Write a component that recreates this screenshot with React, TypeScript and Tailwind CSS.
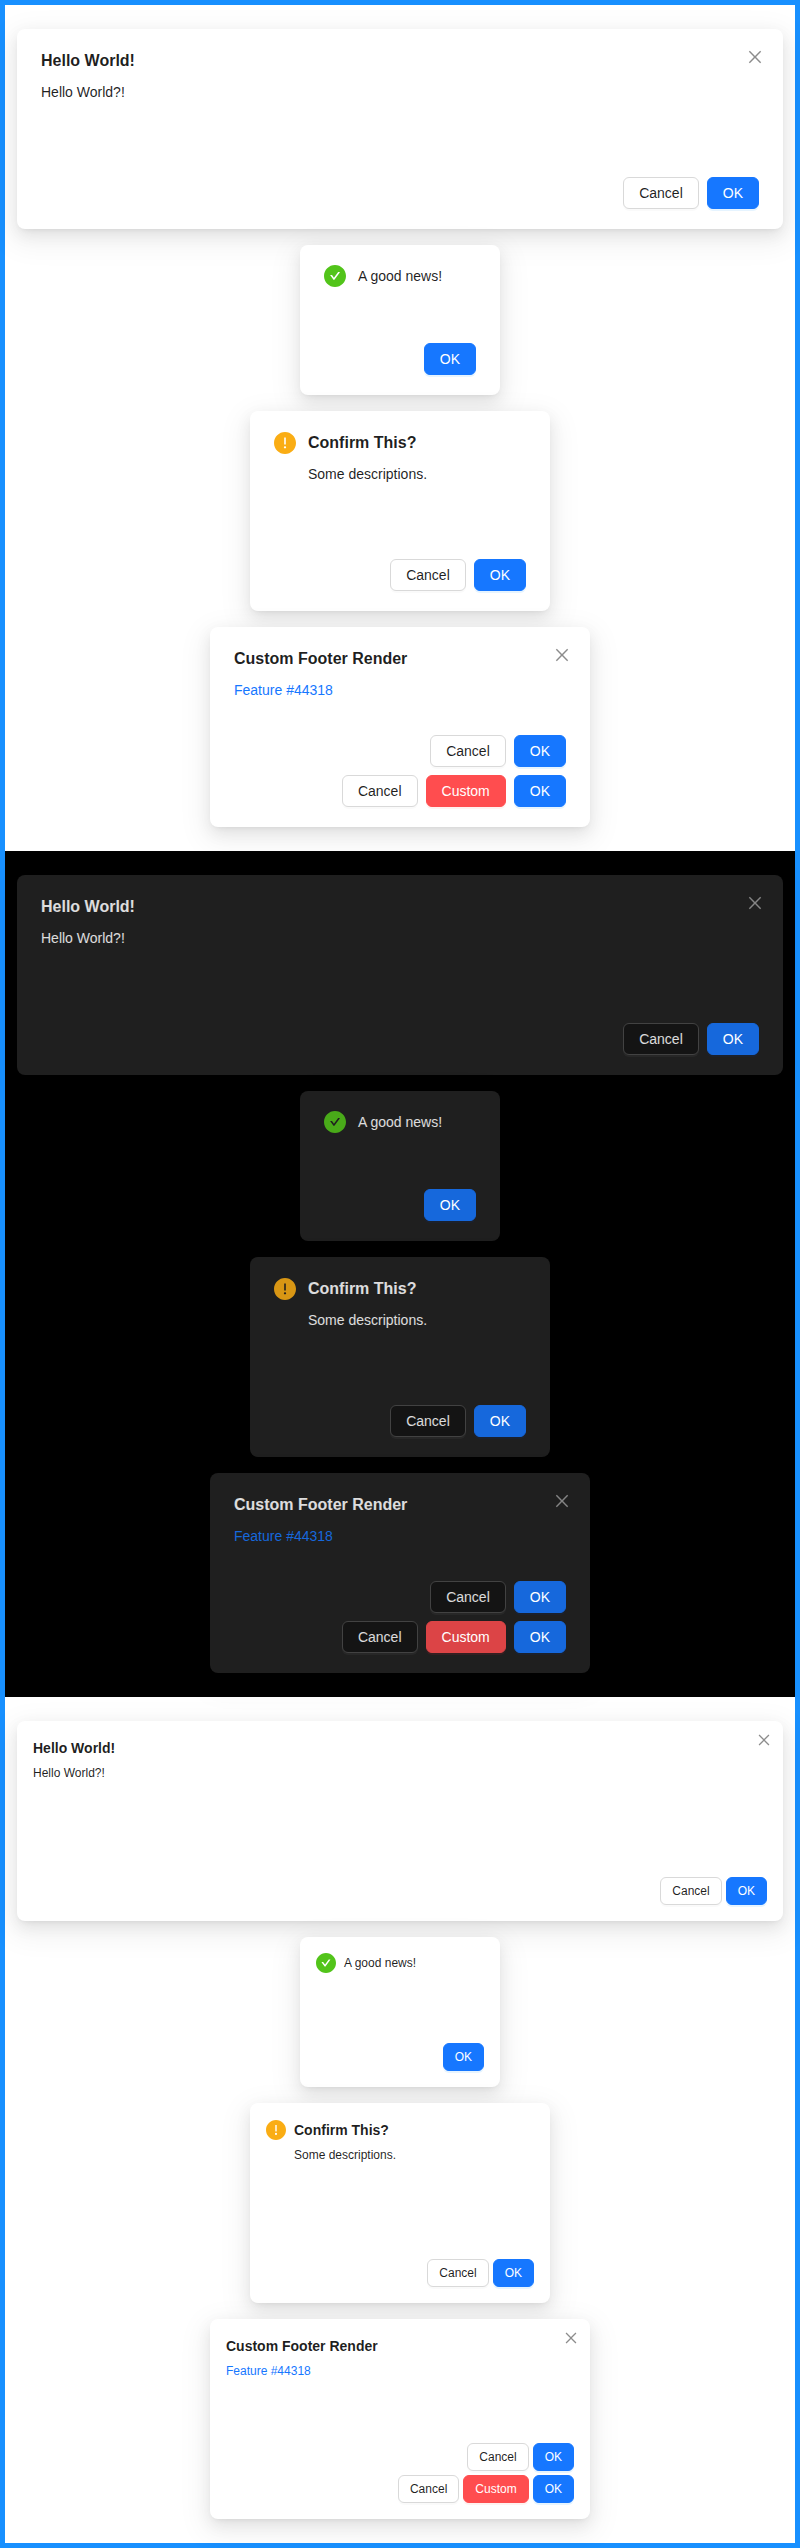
import type { ReactNode } from 'react';
import clsx from 'clsx';

type Mode = 'light' | 'dark';
type Size = 'default' | 'compact';

interface Look {
  mode: Mode;
  size: Size;
}

const CLOSE_PATH =
  'M799.86 166.31c.02 0 .04.02.08.06l57.69 57.7c.04.03.05.05.06.08a.12.12 0 010 .06c0 .03-.02.05-.06.09L569.93 512l287.7 287.7c.04.04.05.06.06.09a.12.12 0 010 .07c0 .02-.02.04-.06.08l-57.7 57.69c-.03.04-.05.05-.07.06a.12.12 0 01-.07 0c-.03 0-.05-.02-.09-.06L512 569.93l-287.7 287.7c-.04.04-.06.05-.09.06a.12.12 0 01-.07 0c-.02 0-.04-.02-.08-.06l-57.69-57.7c-.04-.03-.05-.05-.06-.07a.12.12 0 010-.07c0-.03.02-.05.06-.09L454.07 512l-287.7-287.7c-.04-.04-.05-.06-.06-.09a.12.12 0 010-.07c0-.02.02-.04.06-.08l57.7-57.69c.03-.04.05-.05.07-.06a.12.12 0 01.07 0c.03 0 .05.02.09.06L512 454.07l287.7-287.7c.04-.04.06-.05.09-.06a.12.12 0 01.07 0z';
const CHECK_PATH =
  'M512 64C264.6 64 64 264.6 64 512s200.6 448 448 448 448-200.6 448-448S759.4 64 512 64zm193.5 301.7l-210.6 292a31.8 31.8 0 01-51.7 0L318.5 484.9c-3.8-5.3 0-12.7 6.5-12.7h46.9c10.2 0 19.9 4.9 25.9 13.3l71.2 98.8 157.2-218c6-8.3 15.6-13.3 25.9-13.3H699c6.5 0 10.3 7.4 6.5 12.7z';
const WARNING_PATH =
  'M512 64C264.6 64 64 264.6 64 512s200.6 448 448 448 448-200.6 448-448S759.4 64 512 64zm-32 232c0-4.4 3.6-8 8-8h48c4.4 0 8 3.6 8 8v272c0 4.4-3.6 8-8 8h-48c-4.4 0-8-3.6-8-8V296zm32 440a48.01 48.01 0 010-96 48.01 48.01 0 010 96z';

function Glyph({ path, className }: { path: string; className: string }) {
  return (
    <svg viewBox="64 64 896 896" fill="currentColor" fillRule="evenodd" aria-hidden="true" className={className}>
      <path d={path} />
    </svg>
  );
}

type Kind = 'default' | 'primary' | 'danger';

const kindStyles: Record<Mode, Record<Kind, string>> = {
  light: {
    default: 'border-[#d9d9d9] bg-white text-black/88 shadow-[0_2px_0_rgba(0,0,0,0.02)]',
    primary: 'border-[#1677ff] bg-[#1677ff] text-white shadow-[0_2px_0_rgba(5,145,255,0.1)]',
    danger: 'border-[#ff4d4f] bg-[#ff4d4f] text-white shadow-[0_2px_0_rgba(255,38,5,0.06)]',
  },
  dark: {
    default: 'border-[#424242] bg-[#141414] text-white/85 shadow-[0_2px_0_rgba(255,255,255,0.04)]',
    primary: 'border-[#1668dc] bg-[#1668dc] text-white shadow-[0_2px_0_rgba(0,60,180,0.1)]',
    danger: 'border-[#dc4446] bg-[#dc4446] text-white shadow-[0_2px_0_rgba(238,38,56,0.11)]',
  },
};

function Button({ mode, size, kind = 'default', children }: Look & { kind?: Kind; children: ReactNode }) {
  return (
    <button
      type="button"
      className={clsx(
        'flex cursor-pointer items-center justify-center rounded-md border whitespace-nowrap',
        size === 'default' ? 'h-8 px-[15px] text-sm leading-[22px]' : 'h-7 px-[11px] text-xs leading-5',
        kindStyles[mode][kind],
      )}
    >
      {children}
    </button>
  );
}

function ButtonRow({ size, children }: { size: Size; children: ReactNode }) {
  return <div className={clsx('flex justify-end', size === 'default' ? 'gap-2' : 'gap-1')}>{children}</div>;
}

interface CardProps extends Look {
  className: string;
  title?: string;
  icon?: 'success' | 'warning';
  closable?: boolean;
  children: ReactNode;
  footer: ReactNode;
}

function ModalCard({ mode, size, className, title, icon, closable, children, footer }: CardProps) {
  const regular = size === 'default';
  const light = mode === 'light';
  return (
    <section
      className={clsx(
        'relative flex max-w-full flex-col rounded-lg shadow-[0_6px_16px_0_rgba(0,0,0,0.08),0_3px_6px_-4px_rgba(0,0,0,0.12),0_9px_28px_8px_rgba(0,0,0,0.05)]',
        regular ? 'px-6 py-5' : 'p-4',
        light ? 'bg-white text-black/88' : 'bg-[#1f1f1f] text-white/85',
        className,
      )}
    >
      {closable && (
        <button
          type="button"
          aria-label="Close"
          className={clsx(
            'absolute flex cursor-pointer items-center justify-center rounded',
            regular ? 'top-3 right-3 size-8' : 'top-[5px] right-[5px] size-7',
            light ? 'text-black/45' : 'text-white/45',
          )}
        >
          <Glyph path={CLOSE_PATH} className={regular ? 'size-4' : 'size-3.5'} />
        </button>
      )}
      <div className={clsx('flex flex-1', regular ? 'gap-3' : 'gap-2')}>
        {icon && (
          <span className={clsx('flex flex-none items-center', regular ? 'w-[22px]' : 'w-5', title ? (regular ? 'h-6' : 'h-[22px]') : regular ? 'h-[22px]' : 'h-5')}>
            <Glyph
              path={icon === 'success' ? CHECK_PATH : WARNING_PATH}
              className={clsx(
                regular ? 'size-[22px]' : 'size-5',
                icon === 'success' && (light ? 'text-[#52c41a]' : 'text-[#49aa19]'),
                icon === 'warning' && (light ? 'text-[#faad14]' : 'text-[#d89614]'),
              )}
            />
          </span>
        )}
        <div className={clsx('flex flex-1 flex-col', regular ? 'gap-2' : 'gap-1')}>
          {title && (
            <h2 className={clsx('font-semibold', regular ? 'text-base leading-6' : 'text-sm leading-[22px]')}>{title}</h2>
          )}
          <div className={regular ? 'text-sm leading-[22px]' : 'text-xs leading-5'}>{children}</div>
        </div>
      </div>
      <footer className={clsx('flex flex-col', regular ? 'mt-3 gap-2' : 'mt-2 gap-1')}>{footer}</footer>
    </section>
  );
}

function Showcase({ mode, size }: Look) {
  const look = { mode, size };
  const cancel = <Button {...look}>Cancel</Button>;
  const ok = (
    <Button {...look} kind="primary">
      OK
    </Button>
  );
  return (
    <div className={clsx('flex flex-col items-center gap-4 px-3 py-6', mode === 'dark' && 'bg-black')}>
      <ModalCard
        {...look}
        className="min-h-[200px] w-full"
        title="Hello World!"
        closable
        footer={
          <ButtonRow size={size}>
            {cancel}
            {ok}
          </ButtonRow>
        }
      >
        Hello World?!
      </ModalCard>
      <ModalCard {...look} className="min-h-[150px] w-[200px]" icon="success" footer={<ButtonRow size={size}>{ok}</ButtonRow>}>
        A good news!
      </ModalCard>
      <ModalCard
        {...look}
        className="min-h-[200px] w-[300px]"
        icon="warning"
        title="Confirm This?"
        footer={
          <ButtonRow size={size}>
            {cancel}
            {ok}
          </ButtonRow>
        }
      >
        Some descriptions.
      </ModalCard>
      <ModalCard
        {...look}
        className="min-h-[200px] w-[380px]"
        title="Custom Footer Render"
        closable
        footer={
          <>
            <ButtonRow size={size}>
              {cancel}
              {ok}
            </ButtonRow>
            <ButtonRow size={size}>
              {cancel}
              <Button {...look} kind="danger">
                Custom
              </Button>
              {ok}
            </ButtonRow>
          </>
        }
      >
        <a
          href="https://github.com/ant-design/ant-design/pull/44318"
          className={mode === 'light' ? 'text-[#1677ff]' : 'text-[#1668dc]'}
        >
          Feature #44318
        </a>
      </ModalCard>
    </div>
  );
}

export default function App() {
  return (
    <main className="border-[5px] border-[#1890ff] bg-white font-['Liberation_Sans',Arial,sans-serif]">
      <Showcase mode="light" size="default" />
      <Showcase mode="dark" size="default" />
      <Showcase mode="light" size="compact" />
    </main>
  );
}
